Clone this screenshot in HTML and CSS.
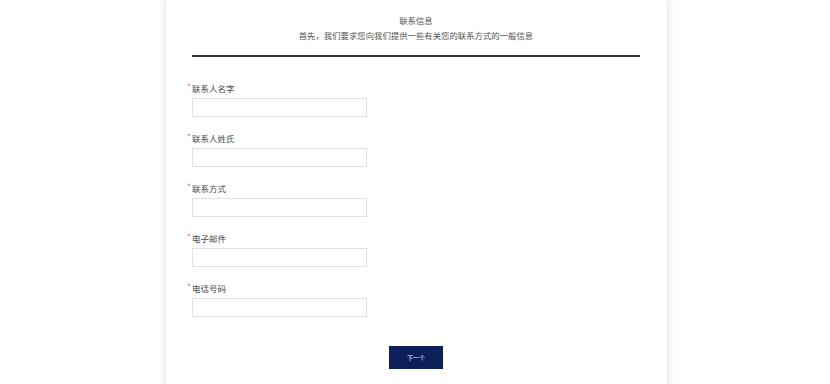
FILE: index.html
```html
<!DOCTYPE html>
<html lang="zh-CN">
<head>
    <meta charset="UTF-8">
    <meta name="viewport" content="width=device-width, initial-scale=1.0">
    <title>联系信息</title>
    <link rel="stylesheet" href="styles.css">
</head>
<body>
    <div class="card">
        <div class="header">
            <div class="title">联系信息</div>
            <div class="subtitle">首先，我们要求您向我们提供一些有关您的联系方式的一般信息</div>
        </div>

        <form class="form">
            <div class="field">
                <label><span class="req">*</span>联系人名字</label>
                <input type="text">
            </div>
            <div class="field">
                <label><span class="req">*</span>联系人姓氏</label>
                <input type="text">
            </div>
            <div class="field">
                <label><span class="req">*</span>联系方式</label>
                <input type="text">
            </div>
            <div class="field">
                <label><span class="req">*</span>电子邮件</label>
                <input type="text">
            </div>
            <div class="field">
                <label><span class="req">*</span>电话号码</label>
                <input type="text">
            </div>

            <div class="actions">
                <button type="button" class="button">下一个</button>
            </div>
        </form>
    </div>
</body>
</html>
```

FILE: styles.css
```css
body {
    margin: 0;
    background: #fff;
    font-family: "Noto Sans CJK SC", "Liberation Sans", sans-serif;
    color: #555;
}
.card {
    width: 501px;
    min-height: 420px;
    margin-left: 166px;
    padding: 0 27px 0 26px;
    box-sizing: border-box;
    background: white;
    box-shadow: 0 0 8px rgba(0,0,0,0.16);
}
.header {
    padding-top: 13px;
    text-align: center;
    border-bottom: 2px solid #263238;
    padding-bottom: 12px;
}
.title,
.subtitle {
    font-size: 8.4px;
    line-height: 15px;
    color: #555;
}
.form {
    padding-top: 25px;
}
.field {
    display: flex;
    flex-direction: column;
    align-items: flex-start;
    margin-bottom: 15px;
}
.field label {
    position: relative;
    font-size: 8.5px;
    line-height: 12px;
    color: #4a4a4a;
    margin-bottom: 4px;
}
.req {
    position: absolute;
    left: -5px;
    top: 0;
    color: #e5585b;
    font-size: 8px;
    line-height: 10px;
}
.field input {
    width: 175px;
    height: 19px;
    box-sizing: border-box;
    border: 1px solid #e0e0e0;
    margin: 0;
    padding: 0 4px;
    outline: none;
}
.actions {
    display: flex;
    justify-content: center;
    padding-top: 14px;
}
.button {
    width: 54px;
    height: 23px;
    border: none;
    padding: 0;
    background: #0c1f5a;
    color: white;
    font-family: "Noto Sans CJK SC", sans-serif;
    font-size: 6px;
}
```
